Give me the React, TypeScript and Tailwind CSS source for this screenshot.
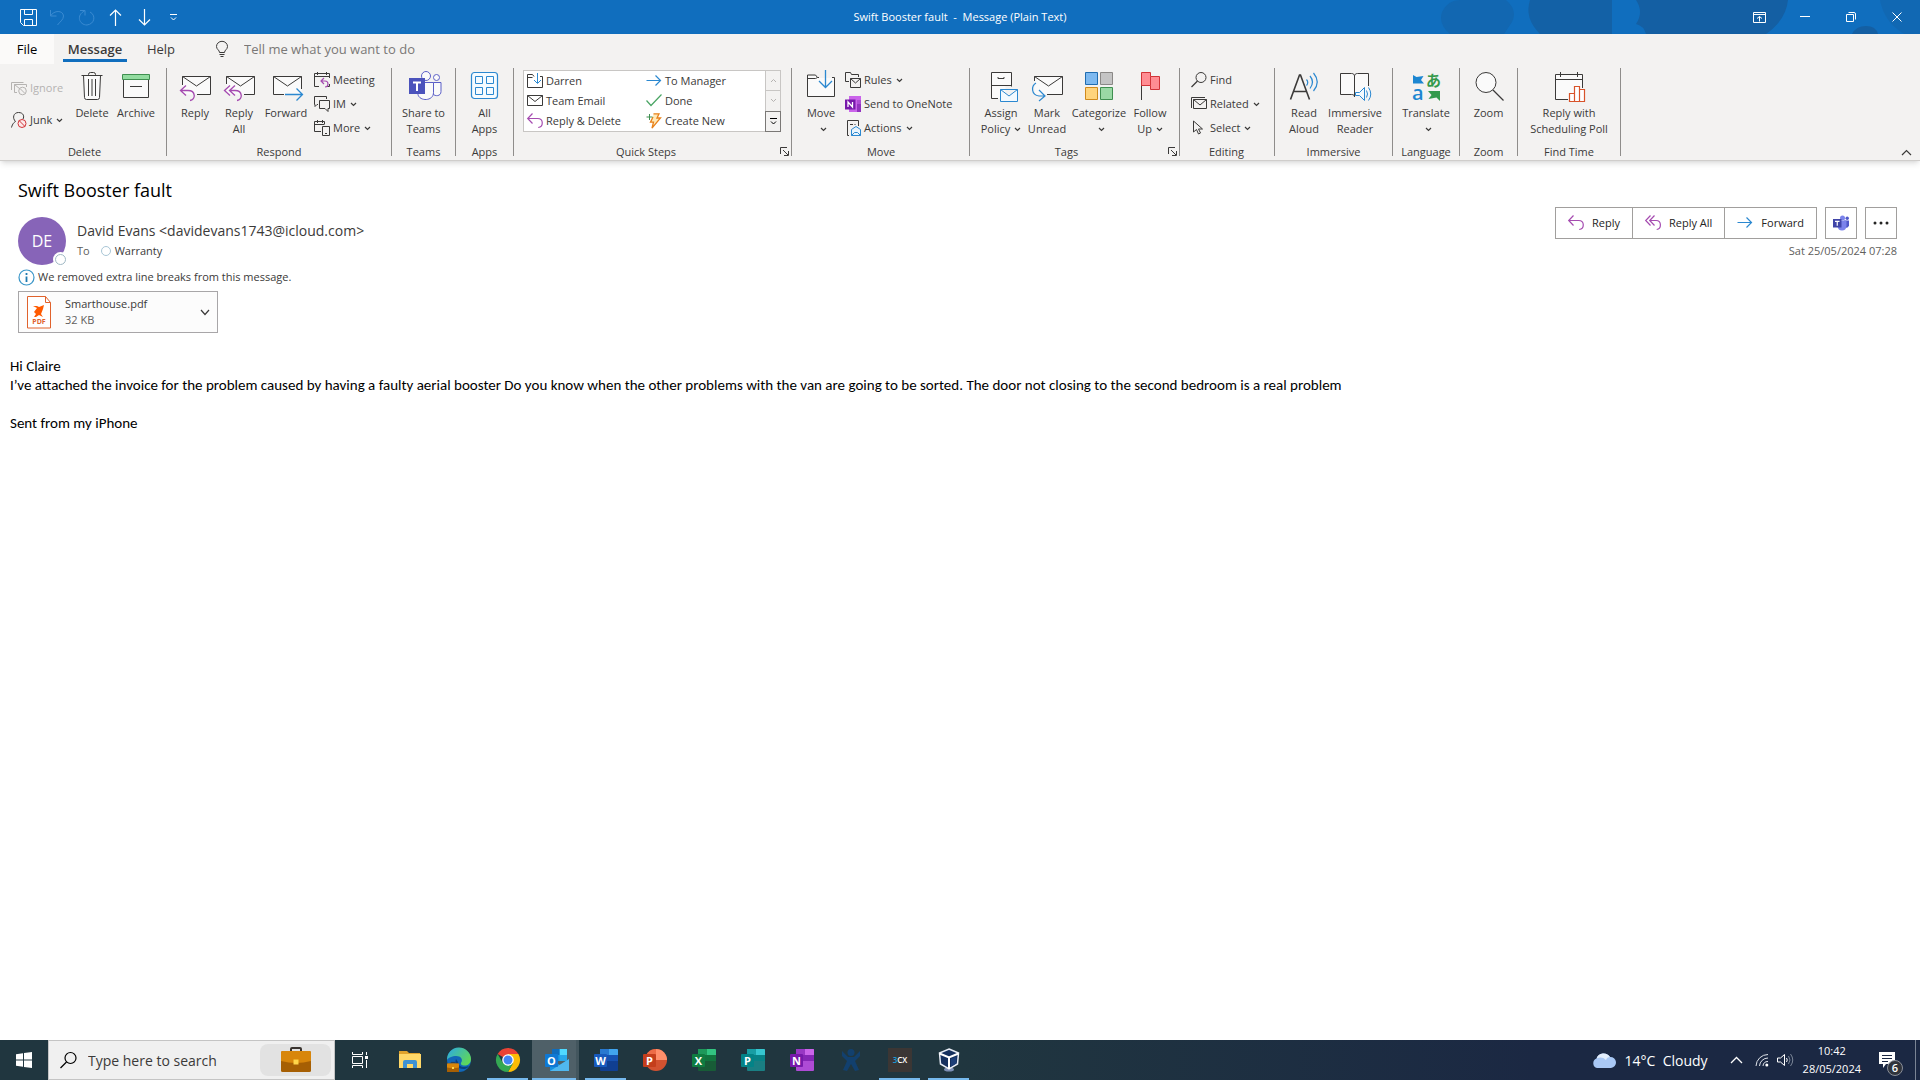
import type { ReactNode } from 'react';

type IconProps = { w?: number; h?: number; className?: string; children: ReactNode };

function Icon({ w = 32, h = 32, className = '', children }: IconProps) {
  return (
    <svg
      width={w}
      height={h}
      viewBox={`0 0 ${w} ${h}`}
      fill="none"
      stroke="#3b3a39"
      strokeWidth="1"
      className={`shrink-0 overflow-visible ${className}`}
      aria-hidden="true"
    >
      {children}
    </svg>
  );
}

const PURPLE = '#a54bb0';
const BLUE = '#2b88d0';

function Caret() {
  return (
    <Icon w={7} h={5} className="inline-block ml-1 mb-px">
      <path d="M1 1l2.5 2.5L6 1" strokeWidth="1.2" />
    </Icon>
  );
}

/* ---------- large ribbon icons (32px) ---------- */

const TrashIcon = () => (
  <Icon>
    <path d="M7.5 6h17l-1 21.5q-.2 2-2 2h-11q-1.8 0-2-2z" fill="#fafafa" stroke="none" />
    <path d="M5.5 5.5h21M7.5 5.5l1 22q.1 2 2 2h11q1.9 0 2-2l1-22M12.5 5.5v-1q0-2 2-2h3q2 0 2 2v1M12.5 9v17M16 9v17M19.5 9v17" />
  </Icon>
);

const ArchiveIcon = () => (
  <Icon>
    <path d="M3.5 9.5h25v18h-25z" fill="#fafafa" />
    <path d="M2.5 4.5h27v5h-27z" fill="#92dca0" stroke="#3f8f50" />
    <path d="M10 16.5h12" />
  </Icon>
);

const Envelope = () => (
  <>
    <path d="M3.5 6.5h28v18h-28z" fill="#fafafa" stroke="none" />
    <path d="M3.5 6.5l14 9.5 14-9.5" />
  </>
);

const ReplyLargeIcon = () => (
  <Icon>
    <Envelope />
    <path d="M3.5 15V6.5h28v18H18" />
    <path d="M7 15.5L1.5 20.5l5.5 5M1.5 20.5H9c8 0 8 9.5 2 10" stroke={PURPLE} strokeWidth="1.3" />
  </Icon>
);

const ReplyAllLargeIcon = () => (
  <Icon>
    <Envelope />
    <path d="M3.5 14V6.5h28v18H21" />
    <path d="M7 15.5L1.5 20.5l5.5 5M12 15.5L6.5 20.5l5.5 5M6.5 20.5H12c8 0 8 9.5 2 10" stroke={PURPLE} strokeWidth="1.3" />
  </Icon>
);

const ForwardLargeIcon = () => (
  <Icon>
    <Envelope />
    <path d="M14 24.5H3.5v-18h28V19" />
    <path d="M15 24.5h17M26.5 18.5l6 6-6 6" stroke={BLUE} strokeWidth="1.3" />
  </Icon>
);

const TeamsLargeIcon = () => (
  <Icon>
    <circle cx="18" cy="6" r="4.5" fill="#fafafa" stroke="#5b5fc7" />
    <circle cx="28.5" cy="7.5" r="3" fill="#fafafa" stroke="#5b5fc7" />
    <path d="M25.5 12.5h7.5v9c0 5-6 5-8 2.5z" fill="#fafafa" stroke="#5b5fc7" />
    <path d="M16 12.5h9.5v10c0 9-14 9-15.5 2z" fill="#fafafa" stroke="#5b5fc7" />
    <path d="M1 8h16v16H1z" fill="#4b53bc" stroke="none" />
    <path d="M5 12.5h8M9 12.5V21" stroke="#fff" strokeWidth="2" />
  </Icon>
);

const AppsIcon = () => (
  <Icon>
    <rect x="2.5" y="2.5" width="26" height="26" rx="3" fill="#f5fbff" stroke={BLUE} strokeWidth="1.2" />
    <path d="M6.5 6.5h7v7h-7zM17.5 6.5h7v7h-7zM6.5 17.5h7v7h-7zM17.5 17.5h7v7h-7z" stroke={BLUE} />
  </Icon>
);

const MoveIcon = () => (
  <Icon>
    <path d="M2.5 5.5h8l2 2.5h17v18.5h-27z" fill="#fafafa" stroke="none" />
    <path d="M14 7.5h-1.5l-2-2.5h-8v21.5h27v-19H27M2.5 8.5h8l2-1" />
    <path d="M20.5 0v17M14 11l6.5 6.5L27 11" stroke={BLUE} strokeWidth="1.3" />
  </Icon>
);

const PolicyIcon = () => (
  <Icon>
    <path d="M6.5 2.5h20v13h-20zM6.5 15.5h14v13h-14z" fill="#fafafa" stroke="none" />
    <path d="M13 28.5H6.5v-26h20v14M6.5 15.5h20M13 7v1.5h6V7" />
    <path d="M15.5 19.5h17v12h-17zM15.5 19.5l8.5 6.5 8.5-6.5" fill="#f3faff" stroke={BLUE} />
  </Icon>
);

const UnreadIcon = () => (
  <Icon>
    <path d="M3.5 6.5h28v18h-28z" fill="#fafafa" stroke="none" />
    <path d="M3.5 11V6.5h28v18H16M3.5 6.5l14 9.5 14-9.5" />
    <path d="M5 13c-5 3-5 12 3 13h6M8 20l6 6-6 5" stroke={BLUE} strokeWidth="1.2" />
  </Icon>
);

const CategorizeIcon = () => (
  <Icon>
    <path d="M2.5 2.5h12v12h-12z" fill="#7db9f0" stroke="#1f6cb0" />
    <path d="M17.5 2.5h12v12h-12z" fill="#c4c4c4" stroke="#8a8886" />
    <path d="M2.5 17.5h12v12h-12z" fill="#ffd47c" stroke="#d08a1c" />
    <path d="M17.5 17.5h12v12h-12z" fill="#9ad9a5" stroke="#3f8f50" />
  </Icon>
);

const FlagIcon = () => (
  <Icon>
    <path d="M7.5 3v27" />
    <path d="M7.5 2.5h9v4h9v13h-9v-4h-9z" fill="#ff8d93" stroke="#d13438" />
    <path d="M16.5 6.5v9" stroke="#d13438" />
  </Icon>
);

const ReadAloudIcon = () => (
  <Icon>
    <path d="M2.5 29.5L11.5 5h1l9 24.5M5.5 21.5h13" strokeWidth="1.6" />
    <path d="M18.5 9.5q2.5 3 0 6M22 6q5 6 0 12.5M25.5 3q7.5 9 0 18" stroke={BLUE} strokeWidth="1.2" />
  </Icon>
);

const ReaderIcon = () => (
  <Icon>
    <path d="M1.5 3.5h11q3 0 3 2 0-2 3-2h11v21h-14H1.5z" fill="#fafafa" stroke="none" />
    <path d="M15.5 27c0-2-1-2.5-3-2.5h-11v-21h11c2 0 3 1 3 3 0-2 1-3 3-3h11V16M15.5 6v21" />
    <path d="M16.5 22.5h4l5-5v13l-5-5h-4zM27.5 20.5q2 3.5 0 7M29.5 17.5q4.5 6.5 0 13" fill="#f3faff" stroke={BLUE} />
  </Icon>
);

const TranslateIcon = () => (
  <Icon>
    <path d="M3 5l3.5 2 7-1-2.5 4 3 3.5H3z" fill="#1c86d1" stroke="none" />
    <path d="M18 21h12v10l-3.5-3.5-8 1.5 3-4z" fill="#34994c" stroke="none" />
    <text x="2" y="30" fontSize="20" fontFamily="Open Sans, sans-serif" fontWeight="600" fill="#1c86d1" stroke="none">a</text>
    <text x="16" y="16" fontSize="15" fontFamily="Noto Sans CJK JP, sans-serif" fontWeight="700" fill="#34994c" stroke="none">あ</text>
  </Icon>
);

const ZoomIcon = () => (
  <Icon>
    <circle cx="13" cy="12.5" r="10" fill="#fafafa" />
    <path d="M20 20l10.5 10.5" strokeWidth="1.3" />
  </Icon>
);

const PollIcon = () => (
  <Icon>
    <path d="M2.5 4.5h27v25h-27z" fill="#fafafa" stroke="none" />
    <path d="M15 29.5H2.5v-25h27V18M2.5 9.5h27M7.5 2v5M24.5 2v5" />
    <path d="M16.5 23.5h5v8h-5zM21.5 16.5h5v15h-5zM26.5 19.5h5v12h-5z" fill="#fff" stroke="#d8532a" strokeWidth="1.2" />
  </Icon>
);

/* ---------- small icons (16px) ---------- */

const IgnoreIcon = () => (
  <Icon w={16} h={16}>
    <g stroke="#b5b3b1">
      <path d="M.5 10V2.5h12M6 12.5H3.5v-8h12V7M3.5 4.5L9 9" />
      <circle cx="11.5" cy="11" r="3.8" />
      <path d="M9 8.5l5 5" />
    </g>
  </Icon>
);

const JunkIcon = () => (
  <Icon w={16} h={16}>
    <path d="M.5 15.5c1-4 3-5.5 4-6C1 6 2.5.5 7.5.5s6 4 4.5 6.5" />
    <circle cx="11" cy="11.5" r="4" stroke="#d13438" fill="#fbe9ea" />
    <path d="M8.2 8.7l5.6 5.6" stroke="#d13438" />
  </Icon>
);

const MeetingIcon = () => (
  <Icon w={16} h={16}>
    <path d="M5 14.5H.5v-13h15V6M.5 4.5h15M3.5 0v3M12.5 0v3M15.5 12v2.5H13" />
    <path d="M10 6L7 9l3 3M7 9h4c4 0 4 6 0 6" stroke={PURPLE} strokeWidth="1.2" />
  </Icon>
);

const ImIcon = () => (
  <Icon w={16} h={16}>
    <path d="M4 8.5H3l-2 2v-2H.5v-8h12V3M5.5 4.5h10v8h-1.5v3l-3-3H5.5z" />
  </Icon>
);

const MoreIcon = () => (
  <Icon w={16} h={16}>
    <path d="M7 11.5H.5v-10h10V4M.5 4.5h10M3.5 0v3M8.5 0v3M8.5 6.5h7v9h-7zM11 13.5h2" />
  </Icon>
);

const FolderDownIcon = () => (
  <Icon w={16} h={16}>
    <path d="M7 3.5L5.5 1.5h-5v13h15v-11H13M.5 4.5h5" />
    <path d="M10.5 0v10M7 7l3.5 3.5L14 7" stroke={BLUE} />
  </Icon>
);

const MailIcon = () => (
  <Icon w={16} h={16}>
    <path d="M.5 2.5h15v10H.5zM.5 2.5L8 8.5l7.5-6" />
  </Icon>
);

const ReplyIcon = () => (
  <Icon w={16} h={16}>
    <path d="M5.5.5L.7 5.5l4.8 5M.7 5.5h10c6 0 6 8.5.5 9" stroke={PURPLE} strokeWidth="1.2" />
  </Icon>
);

const ReplyAllIcon = () => (
  <Icon w={16} h={16}>
    <path d="M5.5.5L.7 5.5l4.8 5M9.5.5L4.7 5.5l4.8 5M4.7 5.5h6.5c5.5 0 5.5 8.5.5 9" stroke={PURPLE} strokeWidth="1.2" />
  </Icon>
);

const ArrowIcon = () => (
  <Icon w={16} h={16}>
    <path d="M.5 7.5h14M9.5 2.5l5 5-5 5" stroke={BLUE} strokeWidth="1.2" />
  </Icon>
);

const CheckIcon = () => (
  <Icon w={16} h={16}>
    <path d="M.5 7.5l4.5 5 10.5-11" stroke="#4aa564" strokeWidth="1.2" />
  </Icon>
);

const BoltIcon = () => (
  <Icon w={16} h={16}>
    <path d="M7.5.8h5.5l-2 4.2h3.5L6 15.2l1.5-6H4.5L7 4" stroke="#e8811a" strokeWidth="1.3" fill="#ffe9b8" />
    <path d="M3.5 1v6M.5 4h6" stroke="#3f8f50" />
  </Icon>
);

const RulesIcon = () => (
  <Icon w={16} h={16}>
    <path d="M4 9.5H.5v-9h5l1 2h7V5M5.5 6.5h10v9h-10zM5.5 6.5l5 4.5 5-4.5" />
  </Icon>
);

const OneNoteSmallIcon = () => (
  <Icon w={16} h={16}>
    <path d="M4 0h12v16H4z" fill="#ca64ea" stroke="none" />
    <path d="M12 4h4v4h-4z" fill="#ae4bd5" stroke="none" />
    <path d="M12 8h4v8h-4z" fill="#9332bf" stroke="none" />
    <path d="M0 3.5h10.5v10H0z" fill="#7719aa" stroke="none" />
    <path d="M3 11V6l4.5 5V6" stroke="#fff" strokeWidth="1.3" />
  </Icon>
);

const ActionsIcon = () => (
  <Icon w={16} h={16}>
    <path d="M4 15.5H2.5V.5h11V6M5 4.5h3M9.5 4.5h1" />
    <path d="M6.5 9.5L11 6.5l4.5 3v6h-9zM6.5 15.5l3-3h3l3 3" stroke={BLUE} fill="#e8f4fd" />
  </Icon>
);

const FindIcon = () => (
  <Icon w={16} h={16}>
    <circle cx="10" cy="5.5" r="5" />
    <path d="M6.5 9L.5 15" strokeWidth="1.2" />
  </Icon>
);

const RelatedIcon = () => (
  <Icon w={16} h={16}>
    <path d="M.5 12V1.5H14M2.5 3.5h13v9h-13zM2.5 3.5L9 9l6.5-5.5" />
  </Icon>
);

const SelectIcon = () => (
  <Icon w={16} h={16}>
    <path d="M2.5 1v11l3-2.5 2 4.5 2-1-2-4h4z" />
  </Icon>
);

const TeamsLogo = () => (
  <Icon w={16} h={16}>
    <g stroke="none">
      <circle cx="9.5" cy="3" r="2.5" fill="#7b83eb" />
      <circle cx="14.2" cy="3.2" r="1.7" fill="#5059c9" />
      <path d="M11 5.5h5v5q-1 3-4 2z" fill="#5059c9" />
      <path d="M6 5.5h7.5v5.5q-.5 4.5-4.5 4.5T4.5 11z" fill="#7b83eb" />
      <path d="M0 4h8.5v8.5H0z" fill="#4045a8" />
    </g>
    <path d="M2 6.3h4.5M4.25 6.3v4.5" stroke="#fff" strokeWidth="1.2" />
  </Icon>
);

/* ---------- ribbon pieces ---------- */

type LargeProps = { icon: ReactNode; lines: string[]; caret?: boolean; className?: string };

function LargeButton({ icon, lines, caret, className = '' }: LargeProps) {
  return (
    <button className={`flex shrink-0 flex-col items-center pt-0.5 whitespace-nowrap leading-4 ${className}`}>
      {icon}
      <span className="mt-[3px]">{lines[0]}</span>
      {(lines[1] || caret) && (
        <span>
          {lines[1]}
          {caret && <Caret />}
        </span>
      )}
    </button>
  );
}

type SmallProps = { icon: ReactNode; label: string; caret?: boolean; className?: string };

function SmallButton({ icon, label, caret, className = 'h-6' }: SmallProps) {
  return (
    <button className={`flex items-center gap-[3px] whitespace-nowrap ${className}`}>
      {icon}
      <span>
        {label}
        {caret && <Caret />}
      </span>
    </button>
  );
}

function Group({ title, launcher, className, children }: { title: string; launcher?: boolean; className: string; children: ReactNode }) {
  return (
    <section className={`relative flex shrink-0 flex-col justify-between border-r border-[#8f8d8b] ${className}`}>
      <div className="flex">{children}</div>
      <h2 className="mt-1 -mb-1 text-center text-[11px] leading-4">{title}</h2>
      {launcher && (
        <button className="absolute right-0.5 bottom-0" aria-label={`${title} options`}>
          <Icon w={9} h={9}>
            <path d="M.5 7V.5H7M3 3l5 5M8.5 4v4.5H4" />
          </Icon>
        </button>
      )}
    </section>
  );
}

const quickSteps = [
  { label: 'Darren', icon: <FolderDownIcon /> },
  { label: 'To Manager', icon: <ArrowIcon /> },
  { label: 'Team Email', icon: <MailIcon /> },
  { label: 'Done', icon: <CheckIcon /> },
  { label: 'Reply & Delete', icon: <ReplyIcon /> },
  { label: 'Create New', icon: <BoltIcon /> },
];

function TitleBar() {
  return (
    <header className="relative flex h-[34px] items-center overflow-hidden bg-[#106ebe] text-white">
      <svg className="absolute right-0 top-0" width="480" height="34" fill="#145fa3" aria-hidden="true">
        <path d="M2 12Q8 0 20 0h46q12 10 6 22l-8 12H10Q-2 24 2 12z" opacity=".5" />
        <path d="M90 0h82v34H100Q84 18 90 0z" opacity=".9" />
        <path d="M196 0h152q-2 20-22 34H206q-2-8-10-10 8-12 0-24z" />
        <path d="M412 34q4-8 14-8t12 8z" />
        <path d="M440 0h40v34h-16q-20-12-24-34z" opacity=".4" />
      </svg>
      <div className="relative flex-1">
        <div className="flex items-center gap-3 pl-5">
          <button aria-label="Save">
            <Icon w={17} h={17}>
              <path d="M.5.5h16v16h-13l-3-3zM4.5.5v5h8v-5M4.5 16.5v-6h8v6" stroke="#fff" />
            </Icon>
          </button>
          <button aria-label="Undo">
            <Icon w={17} h={17}>
              <path d="M1.5 1v6h6M1.5 7C5 1 14 1 14.5 7c0 4-4 6-6 9" stroke="#3a8bd2" />
            </Icon>
          </button>
          <button aria-label="Redo">
            <Icon w={17} h={17}>
              <path d="M2 1.5h5v5M6.5 2C-2 6 1 16 9 16c8-1 9-10 3-13" stroke="#3a8bd2" />
            </Icon>
          </button>
          <button aria-label="Previous item">
            <Icon w={17} h={17}>
              <path d="M8.5 17V1M3 6.5L8.5 1 14 6.5" stroke="#fff" strokeWidth="1.2" />
            </Icon>
          </button>
          <button aria-label="Next item">
            <Icon w={17} h={17}>
              <path d="M8.5 0v16M3 10.5L8.5 16l5.5-5.5" stroke="#fff" strokeWidth="1.2" />
            </Icon>
          </button>
          <button aria-label="Customize toolbar">
            <Icon w={17} h={9}>
              <path d="M5 1.5h7M6 4.5L8.5 7 11 4.5" stroke="#fff" />
            </Icon>
          </button>
        </div>
      </div>
      <h1 className="relative text-[11px] whitespace-pre">{'Swift Booster fault  -  Message (Plain Text)'}</h1>
      <div className="relative flex flex-1 items-center justify-end">
        <button className="flex w-[46px] justify-center" aria-label="Ribbon display options">
          <Icon w={13} h={11}>
            <path d="M.5.5h12v10H.5zM.5 2.5h12M6.5 9.5v-5M4 6.5l2.5-2 2.5 2" stroke="#fff" />
          </Icon>
        </button>
        <button className="flex w-[46px] justify-center" aria-label="Minimize">
          <Icon w={10} h={10}><path d="M0 4.5h10" stroke="#fff" /></Icon>
        </button>
        <button className="flex w-[46px] justify-center" aria-label="Restore">
          <Icon w={10} h={10}>
            <path d="M.5 2.5h7v7h-7zM2.5.5H8q1.5 0 1.5 1.5v5.5" stroke="#fff" />
          </Icon>
        </button>
        <button className="flex w-[46px] justify-center" aria-label="Close">
          <Icon w={10} h={10}><path d="M.5.5l9 9M9.5.5l-9 9" stroke="#fff" /></Icon>
        </button>
      </div>
    </header>
  );
}

function Ribbon() {
  return (
    <div className="relative border-b border-[#cfcdcb] bg-[#f3f2f1] text-[11px] text-[#3b3a39] shadow-md">
      <nav className="flex h-[30px] text-[13px]">
        <button className="w-[54px] bg-[#fbfaf9] pt-0.5 text-black">File</button>
        <button className="relative ml-[9px] w-16 pt-0.5 font-semibold">
          Message
          <span className="absolute inset-x-0 bottom-0.5 h-[3px] bg-[#106ebe]" />
        </button>
        <button className="ml-1 w-[60px] pt-0.5">Help</button>
        <label htmlFor="tell-me" className="ml-[25px] flex items-center">
          <Icon w={12} h={16}>
            <path d="M3.5 11.5C3.5 9 .5 8.5.5 5.5a5.5 5.2 0 0 1 11 0c0 3-3 3.5-3 6zM3.5 13.5h5M4.5 15.5h3" />
          </Icon>
        </label>
        <input
          id="tell-me"
          aria-label="Tell me what you want to do"
          placeholder="Tell me what you want to do"
          className="ml-4 w-60 bg-transparent pt-0.5 outline-none placeholder:text-[#7a7876]"
        />
      </nav>

      <div className="flex h-24 pt-1 pb-1">
        <Group title="Delete" className="w-[167px] pl-[11px] pr-2">
          <div className="w-[59px] pt-1">
            <SmallButton icon={<IgnoreIcon />} label="Ignore" className="h-8 text-[#b5b3b1]" />
            <SmallButton icon={<JunkIcon />} label="Junk" caret className="h-8" />
          </div>
          <LargeButton icon={<TrashIcon />} lines={['Delete']} className="w-11" />
          <LargeButton icon={<ArchiveIcon />} lines={['Archive']} className="w-11" />
        </Group>

        <Group title="Respond" className="w-[225px] pl-1.5 pr-1.5">
          <LargeButton icon={<ReplyLargeIcon />} lines={['Reply']} className="w-11" />
          <LargeButton icon={<ReplyAllLargeIcon />} lines={['Reply', 'All']} className="w-11" />
          <LargeButton icon={<ForwardLargeIcon />} lines={['Forward']} className="w-[50px]" />
          <div className="pl-[3px]">
            <SmallButton icon={<MeetingIcon />} label="Meeting" />
            <SmallButton icon={<ImIcon />} label="IM" caret />
            <SmallButton icon={<MoreIcon />} label="More" caret />
          </div>
        </Group>

        <Group title="Teams" className="w-16">
          <LargeButton icon={<TeamsLargeIcon />} lines={['Share to', 'Teams']} className="flex-1" />
        </Group>

        <Group title="Apps" className="w-[58px]">
          <LargeButton icon={<AppsIcon />} lines={['All', 'Apps']} className="flex-1" />
        </Group>

        <Group title="Quick Steps" launcher className="w-[278px] pl-[9px] pr-2.5 [&>h2]:pr-3">
          <div className="mt-0.5 flex flex-1 border border-[#c8c6c4] bg-white">
            <div className="grid flex-1 grid-cols-2 pl-[3px]">
              {quickSteps.map((step) => (
                <SmallButton key={step.label} icon={step.icon} label={step.label} className="h-5 gap-1" />
              ))}
            </div>
            <div className="flex w-[15px] flex-col bg-[#f3f2f1]">
              <button className="flex flex-1 items-center justify-center border-b border-l border-[#c8c6c4]" aria-label="Scroll up">
                <Icon w={7} h={5}><path d="M1 4l2.5-2.5L6 4" stroke="#b5b3b1" /></Icon>
              </button>
              <button className="flex flex-1 items-center justify-center border-l border-[#c8c6c4]" aria-label="Scroll down">
                <Icon w={7} h={5}><path d="M1 1l2.5 2.5L6 1" stroke="#b5b3b1" /></Icon>
              </button>
              <button className="-mr-px -mb-px flex flex-1 items-center justify-center border border-[#7a7876]" aria-label="More quick steps">
                <Icon w={7} h={7}><path d="M0 .5h7M1 3.5l2.5 2.5L6 3.5" stroke="#000" /></Icon>
              </button>
            </div>
          </div>
        </Group>

        <Group title="Move" className="w-[178px] pl-[5px] pr-1">
          <LargeButton icon={<MoveIcon />} lines={['Move']} caret className="w-12" />
          <div>
            <SmallButton icon={<RulesIcon />} label="Rules" caret />
            <SmallButton icon={<OneNoteSmallIcon />} label="Send to OneNote" />
            <SmallButton icon={<ActionsIcon />} label="Actions" caret />
          </div>
        </Group>

        <Group title="Tags" launcher className="w-[210px] pl-2 [&>h2]:pr-6">
          <LargeButton icon={<PolicyIcon />} lines={['Assign', 'Policy']} caret className="w-[46px]" />
          <LargeButton icon={<UnreadIcon />} lines={['Mark', 'Unread']} className="w-[46px]" />
          <LargeButton icon={<CategorizeIcon />} lines={['Categorize']} caret className="w-[58px]" />
          <LargeButton icon={<FlagIcon />} lines={['Follow', 'Up']} caret className="w-11" />
        </Group>

        <Group title="Editing" className="w-[95px] pl-[11px] pr-3">
          <div>
            <SmallButton icon={<FindIcon />} label="Find" />
            <SmallButton icon={<RelatedIcon />} label="Related" caret />
            <SmallButton icon={<SelectIcon />} label="Select" caret />
          </div>
        </Group>

        <Group title="Immersive" className="w-[118px] pl-1.5 pr-1.5">
          <LargeButton icon={<ReadAloudIcon />} lines={['Read', 'Aloud']} className="w-[46px]" />
          <LargeButton icon={<ReaderIcon />} lines={['Immersive', 'Reader']} className="w-14" />
        </Group>

        <Group title="Language" className="w-[67px]">
          <LargeButton icon={<TranslateIcon />} lines={['Translate']} caret className="flex-1" />
        </Group>

        <Group title="Zoom" className="w-[58px]">
          <LargeButton icon={<ZoomIcon />} lines={['Zoom']} className="flex-1" />
        </Group>

        <Group title="Find Time" className="w-[103px]">
          <LargeButton icon={<PollIcon />} lines={['Reply with', 'Scheduling Poll']} className="flex-1" />
        </Group>

        <button className="ml-auto mr-2 self-end" aria-label="Collapse the ribbon">
          <Icon w={11} h={7}><path d="M1 6l4.5-4.5L10 6" strokeWidth="1.2" /></Icon>
        </button>
      </div>
    </div>
  );
}

function Message() {
  return (
    <main className="flex-1 bg-white text-[11px] text-[#3b3a39]">
      <div className="pl-[18px] pr-[23px] pt-[15px]">
        <h2 className="text-[18px] leading-7 text-black">Swift Booster fault</h2>
        <div className="mt-[3px] flex items-start justify-between">
          <div className="mt-2.5 flex gap-[11px]">
            <div className="relative flex size-12 items-center justify-center rounded-full bg-[#8764b8] text-base text-white">
              DE
              <span className="absolute -right-0.5 -bottom-0.5 size-[15px] rounded-full border-2 border-white bg-white">
                <span className="block size-[11px] rounded-full border border-[#9fb8c4]" />
              </span>
            </div>
            <div className="pt-1">
              <p className="text-[14px] leading-5">David Evans &lt;davidevans1743@icloud.com&gt;</p>
              <p className="flex items-center leading-5">
                <span className="text-[#605e5c]">To</span>
                <span className="ml-[11px] mr-1 size-2.5 rounded-full border border-[#a9c6d6]" />
                Warranty
              </p>
            </div>
          </div>
          <div className="flex flex-col items-end text-[#252423]">
            <div className="flex h-8 gap-2">
              <div className="flex divide-x divide-[#a19f9d] border border-[#a19f9d]">
                <button className="flex items-center gap-2 px-3"><ReplyIcon />Reply</button>
                <button className="flex items-center gap-2 px-3"><ReplyAllIcon />Reply All</button>
                <button className="flex items-center gap-2 px-3"><ArrowIcon />Forward</button>
              </div>
              <button className="flex w-8 items-center justify-center border border-[#a19f9d]" aria-label="Share to Teams">
                <TeamsLogo />
              </button>
              <button className="flex w-8 items-center justify-center border border-[#a19f9d]" aria-label="More actions">
                <Icon w={16} h={4}>
                  <g fill="#252423" stroke="none">
                    <circle cx="2" cy="2" r="1.5" />
                    <circle cx="8" cy="2" r="1.5" />
                    <circle cx="14" cy="2" r="1.5" />
                  </g>
                </Icon>
              </button>
            </div>
            <time className="mt-0.5 leading-5 text-[#605e5c]">Sat 25/05/2024 07:28</time>
          </div>
        </div>
        <p className="mt-0.5 flex items-center gap-[3px] leading-5">
          <Icon w={17} h={17}>
            <circle cx="8.5" cy="8.5" r="7.5" stroke="#3a96c8" strokeWidth="1.2" />
            <path d="M8.5 7.5V13M8.5 4v2" stroke="#1f7ab0" strokeWidth="1.8" />
          </Icon>
          We removed extra line breaks from this message.
        </p>
        <button className="mt-1 flex h-[42px] w-[200px] items-center border border-[#a8a6a8] bg-[#fcfcfc] pl-2 pr-[7px] text-left leading-4">
          <Icon w={25} h={33}>
            <path d="M.5.5h18l5 6v25.5h-23z" fill="#fff" stroke="#e0622c" />
            <path d="M18.5.5v6h5" stroke="#e0622c" />
            <path d="M6 10h4l2 1 5-2-1 4-2 5 2 3-4-2-3 2H7l2-3-2-2 3-4z" fill="#ff5a00" stroke="none" />
            <text x="12" y="28" textAnchor="middle" fontSize="7" fontWeight="700" fill="#e0622c" stroke="none">PDF</text>
          </Icon>
          <span className="ml-[13px] flex-1">
            <span className="block">Smarthouse.pdf</span>
            <span className="block text-[#605e5c]">32 KB</span>
          </span>
          <Icon w={10} h={7}><path d="M1 1l4 4.5L9 1" strokeWidth="1.2" /></Icon>
        </button>
      </div>
      <article className="mt-6 px-2.5 font-['Carlito','Lato',sans-serif] text-[15px] leading-[19px] text-black">
        <p>Hi Claire</p>
        <p>
          I’ve attached the invoice for the problem caused by having a faulty aerial booster Do you know when the other
          problems with the van are going to be sorted. The door not closing to the second bedroom is a real problem
        </p>
        <p className="mt-[19px]">Sent from my iPhone</p>
      </article>
    </main>
  );
}

/* ---------- taskbar ---------- */

function OfficeIcon({ letter, base, light, dark, round }: { letter: string; base: string; light: string; dark: string; round?: boolean }) {
  return (
    <Icon w={24} h={24}>
      <g stroke="none">
        {round ? (
          <>
            <circle cx="13" cy="12" r="11" fill={dark} />
            <path d="M13 1a11 11 0 0 1 11 11H13z" fill={light} />
            <path d="M13 1a11 11 0 0 0-11 11h11z" fill="#ed6c47" />
          </>
        ) : (
          <>
            <rect x="6" y="1" width="18" height="22" rx="1" fill={dark} />
            <path d="M6 1h17q1 0 1 1v5H6z" fill={light} />
            <path d="M6 7h18v6H6z" fill={base} opacity=".75" />
            <path d="M6 1h9v6H6z" fill={base} opacity=".6" />
          </>
        )}
        <rect x="0" y="6" width="13" height="13" rx="1" fill={base} />
        <text x="6.5" y="16.5" textAnchor="middle" fontSize="11" fontWeight="700" fill="#fff">{letter}</text>
      </g>
    </Icon>
  );
}

const TaskViewIcon = () => (
  <Icon w={16} h={16}>
    <path d="M.5 0v2.5h10V0M.5 4.5h10v7H.5zM.5 16v-2.5h10V16M14.5 0v3M14.5 8v8" stroke="#fff" />
    <path d="M13 4h3v3h-3z" fill="#fff" stroke="none" />
  </Icon>
);

const ExplorerIcon = () => (
  <Icon w={24} h={24}>
    <g stroke="none">
      <path d="M1 3h8l2 2h11v5H1z" fill="#e0a32c" />
      <path d="M1 6h22v14H1z" fill="#ffd868" />
      <path d="M5 20v-6q0-2 2-2h10q2 0 2 2v6h-4v-4H9v4z" fill="#3f92d2" />
    </g>
  </Icon>
);

const Briefcase = () => (
  <>
    <path d="M10 4V2q0-1 1-1h8q1 0 1 1v2" stroke="#3a3430" strokeWidth="2" />
    <rect x="0" y="4" width="30" height="21" rx="1.5" fill="#a65f04" stroke="none" />
    <path d="M0 5.5Q0 4 1.5 4h27Q30 4 30 5.5V14Q15 18 0 14z" fill="#d8860b" stroke="none" />
    <path d="M12.5 12.5h5v5h-5z" fill="#ffd54a" stroke="none" />
  </>
);

const EdgeIcon = () => (
  <Icon w={24} h={24}>
    <defs>
      <linearGradient id="edge-top" x1="0" y1="0" x2="1" y2="0.6">
        <stop offset="0" stopColor="#2aa9e8" />
        <stop offset="1" stopColor="#5fd65a" />
      </linearGradient>
    </defs>
    <g stroke="none">
      <circle cx="12" cy="12" r="12" fill="#1267b8" />
      <path d="M0 12a12 12 0 0 1 24-1c0 5-4 7-7.5 6.5-3-.5-3-2-2-3.5 1.5-3-1-6-5-6C5 8 1 10 0 12z" fill="url(#edge-top)" />
      <path d="M9 11c-2 5 2 11 9 10q3-1 4-3c-5 2-11 1-11-4z" fill="#0b3f80" />
    </g>
    <g transform="translate(0 14) scale(.4)"><Briefcase /></g>
  </Icon>
);

const ChromeIcon = () => (
  <Icon w={24} h={24}>
    <g stroke="none">
      <path d="M12 12L1.6 6A12 12 0 0 1 22.4 6z" fill="#ea4335" />
      <path d="M12 12V6h10.4A12 12 0 0 1 12 24l5-9z" fill="#fbbc05" />
      <path d="M12 12l5 3-5 9A12 12 0 0 1 1.6 6L7 15z" fill="#34a853" />
      <circle cx="12" cy="12" r="5.8" fill="#fff" />
      <circle cx="12" cy="12" r="4.5" fill="#4285f4" />
    </g>
  </Icon>
);

const OutlookIcon = () => (
  <Icon w={24} h={24}>
    <g stroke="none">
      <path d="M7 1h15v12H7z" fill="#1490df" />
      <path d="M14.5 1H22v6h-7.5z" fill="#50d9ff" />
      <path d="M7 1h7.5v6H7z" fill="#0f6cbd" />
      <path d="M14.5 7H22v6h-7.5z" fill="#28a8ea" />
      <path d="M5 11l10 6 9-6v12H5z" fill="#1490df" />
      <path d="M5 23l19-12v12z" fill="#50b8f0" />
      <rect x="0" y="6" width="13" height="13" rx="1" fill="#0f78d4" />
      <text x="6.5" y="16.5" textAnchor="middle" fontSize="11" fontWeight="700" fill="#fff">O</text>
    </g>
  </Icon>
);

const FigureIcon = () => (
  <Icon w={24} h={24}>
    <g stroke="none" fill="#12406e">
      <circle cx="12" cy="4.5" r="3.5" />
      <path d="M3 3l6 6h6l6-6v5l-5 5 4 9-4 1-4-7-4 7-4-1 4-9-5-5z" />
    </g>
  </Icon>
);

const CxIcon = () => (
  <Icon w={24} h={24}>
    <rect width="24" height="24" fill="#3b3634" stroke="none" />
    <text x="12" y="15" textAnchor="middle" fontSize="8" fontWeight="600" fill="#fff" stroke="none">
      <tspan fill="#1a9ad6">3</tspan>CX
    </text>
  </Icon>
);

const CubeIcon = () => (
  <Icon w={24} h={24}>
    <ellipse cx="12" cy="21.5" rx="5" ry="2" fill="#7d8fb5" stroke="none" />
    <path d="M12 1l9.5 4-1 11L12 21l-8.5-5-1-11z" fill="#15305e" stroke="#e8edf6" strokeWidth="1.5" />
    <path d="M2.5 5.5L12 9.5l9.5-4M12 9.5V21" stroke="#fff" strokeWidth="2" />
    <path d="M14 11l5.5-2.5-.5 7-5 3z" fill="#1d3f78" stroke="none" />
  </Icon>
);

const apps = [
  { name: 'File Explorer', icon: <ExplorerIcon /> },
  { name: 'Edge', icon: <EdgeIcon /> },
  { name: 'Chrome', icon: <ChromeIcon />, open: true },
  { name: 'Outlook', icon: <OutlookIcon />, active: true },
  { name: 'Word', icon: <OfficeIcon letter="W" base="#185abd" light="#41a5ee" dark="#103f91" />, open: true },
  { name: 'PowerPoint', icon: <OfficeIcon letter="P" base="#c43e1c" light="#ff8f6b" dark="#d35230" round /> },
  { name: 'Excel', icon: <OfficeIcon letter="X" base="#107c41" light="#33c481" dark="#185c37" /> },
  { name: 'Publisher', icon: <OfficeIcon letter="P" base="#038387" light="#37c6d0" dark="#1a7f83" /> },
  { name: 'OneNote', icon: <OfficeIcon letter="N" base="#7719aa" light="#ca64ea" dark="#ae4bd5" /> },
  { name: 'Assistant', icon: <FigureIcon /> },
  { name: '3CX', icon: <CxIcon />, open: true },
  { name: 'VirtualBox', icon: <CubeIcon />, open: true },
];

function Taskbar() {
  return (
    <footer className="flex h-10 bg-linear-to-r from-[#20363f] from-50% to-[#1b2843] to-80% text-white">
      <button className="flex w-12 items-center justify-center" aria-label="Start">
        <Icon w={16} h={16}>
          <path d="M0 2.2L7 1.2v6.3H0zM8 1l8-1v7.5H8zM0 8.5h7v6.3l-7-1zM8 8.5h8V16l-8-1z" fill="#fff" stroke="none" />
        </Icon>
      </button>
      <div className="flex w-[287px] items-center border border-[#c4c4c4] bg-[#f0f0f0] pl-[11px] pr-[3px] text-[#3b3a39]">
        <label htmlFor="search">
          <Icon w={17} h={17}>
            <circle cx="10.5" cy="6" r="5.5" stroke="#000" strokeWidth="1.2" />
            <path d="M6.5 10L.5 16" stroke="#000" strokeWidth="1.2" />
          </Icon>
        </label>
        <input
          id="search"
          aria-label="Type here to search"
          placeholder="Type here to search"
          className="ml-[11px] min-w-0 flex-1 bg-transparent text-[14px] outline-none placeholder:text-[#3b3a39]"
        />
        <div className="flex h-8 w-[71px] items-center justify-center rounded-lg bg-[#e2e2e2]">
          <Icon w={30} h={26}><Briefcase /></Icon>
        </div>
      </div>
      <button className="flex w-[50px] items-center justify-center" aria-label="Task View">
        <TaskViewIcon />
      </button>
      <div className="flex">
        {apps.map((app) => (
          <button key={app.name} className="relative flex w-[49px] items-center justify-center" aria-label={app.name}>
            {app.active && <span className="absolute inset-y-0 left-0 right-0.5 border-r-[3px] border-[#43565e] bg-[#4f6068]" />}
            <span className="relative">{app.icon}</span>
            {app.open && <span className="absolute inset-x-1 bottom-0 h-0.5 bg-[#76b9ed]" />}
            {app.active && <span className="absolute bottom-0 left-0 right-[5px] h-0.5 bg-[#76b9ed]" />}
          </button>
        ))}
      </div>
      <div className="ml-auto flex items-center">
        <button className="flex items-center gap-[9px] whitespace-pre text-[14px]">
          <Icon w={24} h={16}>
            <path d="M5 16a5 5 0 0 1-.5-9.5A7.5 7.5 0 0 1 18 5a5.5 5.5 0 0 1 1 11z" fill="#a9c8f5" stroke="none" />
            <path d="M4.5 6.5A7.5 7.5 0 0 1 18 5q-3 0-4 3-4-4-9.5-1.5z" fill="#e3eefc" stroke="none" />
          </Icon>
          {'14°C  Cloudy'}
        </button>
        <button className="ml-[22px]" aria-label="Show hidden icons">
          <Icon w={13} h={8}><path d="M1 7l5.5-5.5L12 7" stroke="#fff" strokeWidth="1.3" /></Icon>
        </button>
        <button className="ml-3" aria-label="Network">
          <Icon w={14} h={14}>
            <path d="M1 13A12 12 0 0 1 13 1.5M4.5 13A8.5 8.5 0 0 1 13 5M8 13a5 5 0 0 1 5-4.5" stroke="#dfe3ea" />
            <circle cx="11.8" cy="12" r="1.5" fill="#fff" stroke="none" />
          </Icon>
        </button>
        <button className="ml-2" aria-label="Volume">
          <Icon w={16} h={14}>
            <path d="M.5 5h3l4-3.5v11l-4-3.5h-3zM9.5 5q1.5 2 0 4" stroke="#fff" />
            <path d="M11.5 3q3 4 0 8M13.5 1q4.5 6 0 12" stroke="#7c8798" />
          </Icon>
        </button>
        <time className="ml-2.5 text-center text-[11px] leading-[18px]">
          10:42
          <br />
          28/05/2024
        </time>
        <button className="relative ml-[18px] mr-3 pr-2" aria-label="Notifications">
          <Icon w={16} h={16}>
            <path d="M0 0h16v12H7l-3 4v-4H0z" fill="#fff" stroke="none" />
            <path d="M3 3.5h10M3 6.5h10M3 9.5h6" stroke="#1b2843" />
          </Icon>
          <span className="absolute -bottom-2 right-0 flex size-4 items-center justify-center rounded-full border border-[#8a8f99] bg-[#30343c] text-[11px] font-semibold">
            6
          </span>
        </button>
        <span className="mr-1 h-10 w-px bg-[#7a8494]" />
      </div>
    </footer>
  );
}

export default function App() {
  return (
    <div className="flex min-h-screen flex-col font-['Open_Sans','Noto_Sans',sans-serif]">
      <TitleBar />
      <Ribbon />
      <Message />
      <Taskbar />
    </div>
  );
}
